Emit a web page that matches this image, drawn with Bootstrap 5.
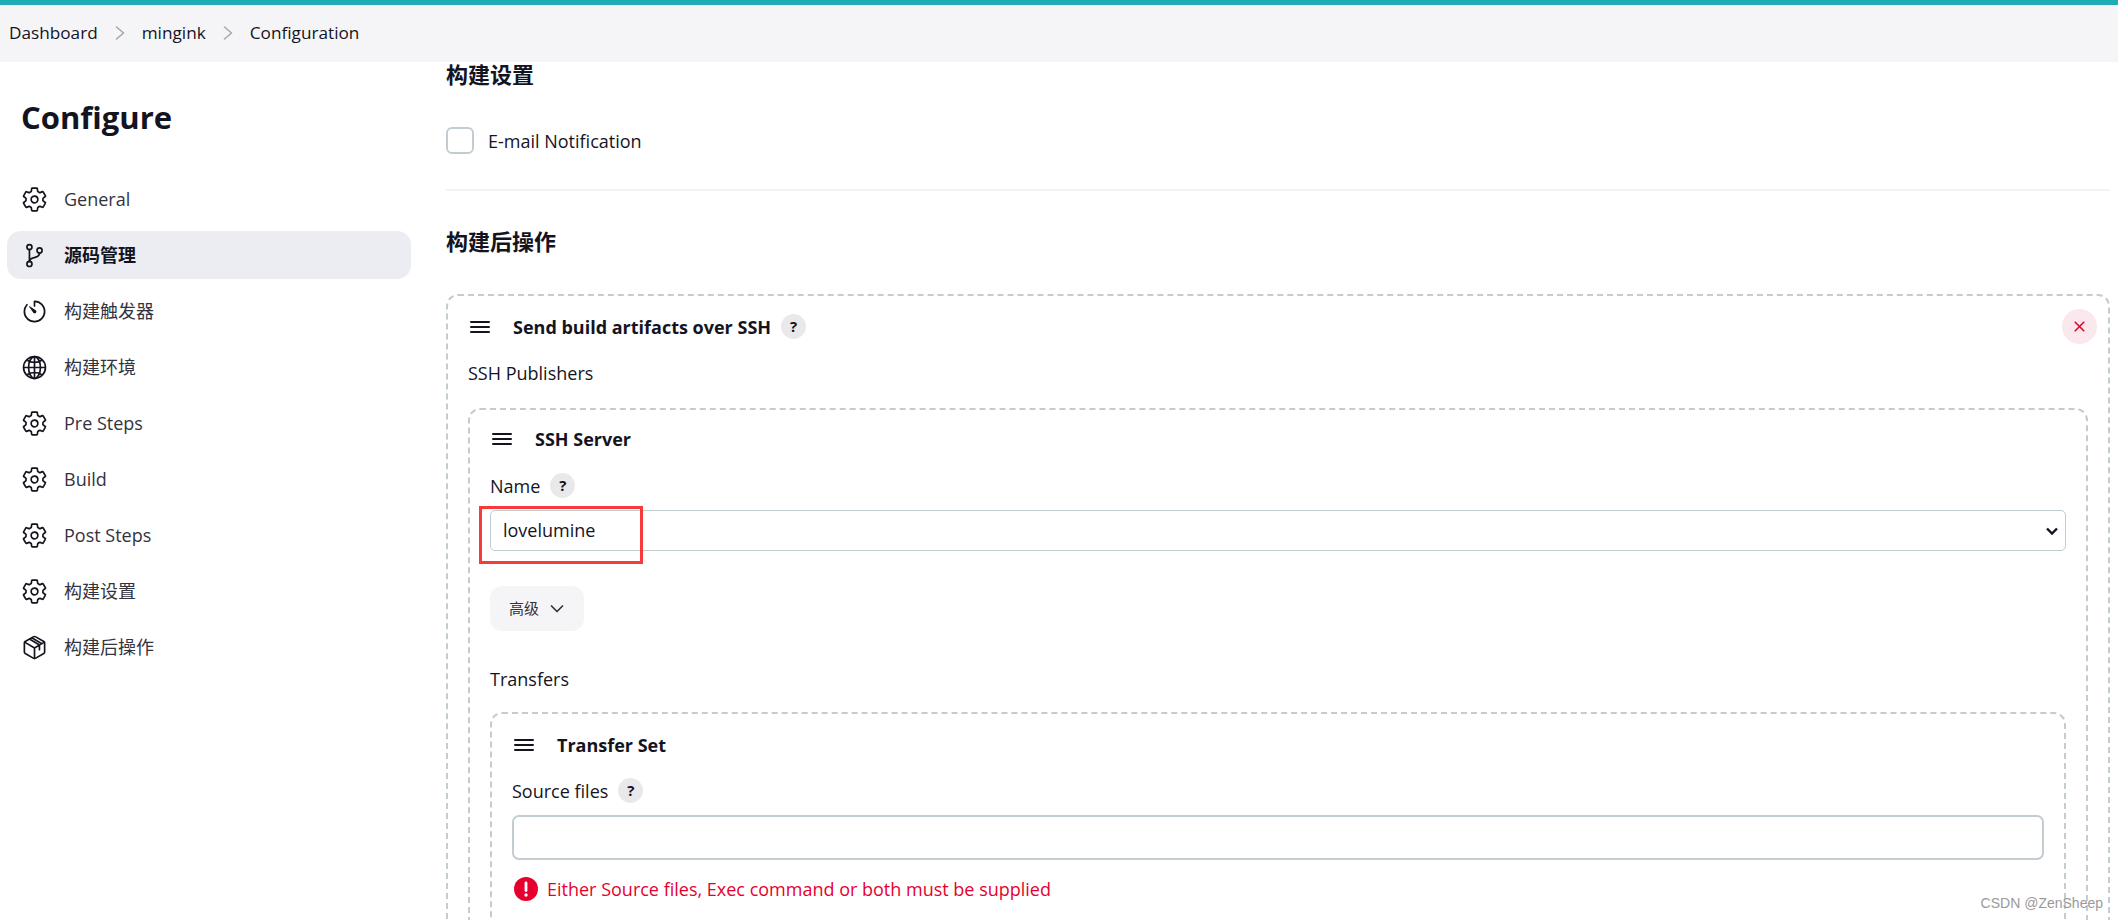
<!DOCTYPE html>
<html lang="zh"><head><meta charset="utf-8"><title>Configuration</title>
<link href="https://cdn.jsdelivr.net/npm/bootstrap@5.3.0/dist/css/bootstrap.min.css" rel="stylesheet">
<style>
html,body{height:920px;overflow:hidden}
body{font-family:"Open Sans","Noto Sans CJK SC",sans-serif;font-size:18px;color:#14141f;line-height:24px;background:#fff;position:relative}
.topline{height:5px;background:#1eadb3}
.crumbs{height:57px;background:#f5f5f7;padding-left:9px;padding-bottom:1px;font-size:17.2px}
.crumbs svg{width:16px;height:16px;margin:0 14px 0 14px;color:#a5a5b5}
.shell{align-items:flex-start}
.side{width:446px;flex:none;padding:0 35px 0 7px}
.side h1{font-size:31px;font-weight:700;line-height:40px;margin:35px 0 38px 14px;color:#14141f}
.sideitem{height:48px;margin-bottom:8px;border-radius:14px;padding-left:14px;gap:16px;color:#333340;text-decoration:none}
.sideitem svg{width:27px;height:27px;flex:none;color:#14141f}
.sideitem.on{background:#ecedf2;font-weight:700;color:#14141f}
.mainpane{flex:1;padding-right:8px;min-width:0}
.sect{font-size:22px;font-weight:700;line-height:28px;margin:0}
.tick{width:28px;height:27px;border:2.5px solid #c3ccd1;border-radius:6px;flex:none}
.rule{height:2px;background:#f3f3f5;margin:0}
.dash{border:2px dashed #c3ccd1;border-radius:12px;position:relative}
.bar3{width:20px;height:20px;flex:none}
.lbl{font-weight:700}
.qmark{width:25px;height:25px;border-radius:50%;background:#e9e9ec;font-size:15px;font-weight:700;line-height:25px;text-align:center;flex:none}
.killbtn{position:absolute;right:11px;top:13px;width:35px;height:35px;border-radius:50%;background:#fbe8ec;color:#e6002e;border:0;padding:0}
.killbtn svg{width:19px;height:19px}
.namesel.form-select{height:41px;border:1px solid #c3ccd1;border-radius:5px;font-size:18px;color:#14141f;padding:0 36px 0 12px;box-shadow:none;background-image:url("data:image/svg+xml,%3csvg xmlns='http://www.w3.org/2000/svg' viewBox='0 0 12 12'%3e%3cpath fill='none' stroke='%2314141f' stroke-width='2.4' d='M1 3.5l5 5 5-5'/%3e%3c/svg%3e");background-size:12px 12px;background-position:right 7px center}
.markbox{position:absolute;left:-11px;top:-4px;width:164px;height:58px;border:3px solid #f73a3a;pointer-events:none}
.advbtn.btn{background:#f5f5f7;border:0;border-radius:12px;width:94px;height:45px;font-size:15px;color:#333340;padding:0;gap:10px}
.srcinput.form-control{height:45px;border:2px solid #c3ccd1;border-radius:7px;box-shadow:none}
.errline{color:#e6002e;gap:9px;padding-left:2px}
.errline svg{width:24px;height:24px}
.stamp{position:absolute;right:15px;bottom:8px;font-family:"Liberation Sans",sans-serif;font-size:14px;line-height:18px;color:#9a9a9a}
</style></head>
<body>
<svg width="0" height="0" class="d-block position-absolute">
<symbol id="gear" viewBox="0 0 512 512"><path fill="none" stroke="currentColor" stroke-width="32" stroke-linecap="round" stroke-linejoin="round" d="M262.29 192.31a64 64 0 1057.4 57.4 64.13 64.13 0 00-57.4-57.4zM416.39 256a154.34 154.34 0 01-1.53 20.79l45.21 35.46a10.81 10.81 0 012.45 13.75l-42.77 74a10.81 10.81 0 01-13.14 4.59l-44.9-18.08a16.11 16.11 0 00-15.17 1.75A164.48 164.48 0 01325 400.8a15.94 15.94 0 00-8.82 12.14l-6.73 47.89a11.08 11.08 0 01-10.68 9.17h-85.54a11.11 11.11 0 01-10.69-8.87l-6.72-47.82a16.07 16.07 0 00-9-12.22 155.3 155.3 0 01-21.46-12.57 16 16 0 00-15.11-1.71l-44.89 18.07a10.81 10.81 0 01-13.14-4.58l-42.77-74a10.8 10.8 0 012.45-13.75l38.21-30a16.05 16.05 0 006-14.08c-.36-4.17-.58-8.33-.58-12.5s.21-8.27.58-12.35a16 16 0 00-6.07-13.94l-38.19-30A10.81 10.81 0 0149.48 186l42.77-74a10.81 10.81 0 0113.14-4.59l44.9 18.08a16.11 16.11 0 0015.17-1.75A164.48 164.48 0 01187 111.2a15.94 15.94 0 008.82-12.14l6.73-47.89A11.08 11.08 0 01213.23 42h85.54a11.11 11.11 0 0110.69 8.87l6.72 47.82a16.07 16.07 0 009 12.22 155.3 155.3 0 0121.46 12.57 16 16 0 0015.11 1.71l44.89-18.07a10.81 10.81 0 0113.14 4.58l42.77 74a10.8 10.8 0 01-2.45 13.75l-38.21 30a16.05 16.05 0 00-6.05 14.08c.33 4.14.55 8.3.55 12.47z"/></symbol>
<symbol id="branch" viewBox="0 0 512 512"><g fill="none" stroke="currentColor" stroke-width="32" stroke-linecap="round" stroke-linejoin="round"><circle cx="160" cy="96" r="48"/><circle cx="160" cy="416" r="48"/><path d="M160 368V144"/><circle cx="352" cy="160" r="48"/><path d="M352 208c0 128-192 48-192 160"/></g></symbol>
<symbol id="timer" viewBox="0 0 512 512"><g fill="none" stroke="currentColor" stroke-width="32" stroke-linecap="round" stroke-linejoin="round"><path d="M112.91 128A191.85 191.85 0 0064 254c-1.18 106.35 85.65 193.8 192 194 106.2.2 192-85.83 192-192 0-104.54-83.55-189.61-187.5-192a4.36 4.36 0 00-4.5 4.37V152"/></g><path fill="currentColor" d="M233.38 278.63l-79-113a8.13 8.13 0 0111.32-11.32l113 79a32.5 32.5 0 01-37 53.34 33.21 33.21 0 01-8.32-8.02z"/></symbol>
<symbol id="globe" viewBox="0 0 512 512"><g fill="none" stroke="currentColor" stroke-width="32" stroke-miterlimit="10"><path d="M256 48C141.13 48 48 141.13 48 256s93.13 208 208 208 208-93.13 208-208S370.87 48 256 48z"/><path d="M256 48c-58.07 0-112.67 93.31-112.67 208S197.93 464 256 464s112.67-93.31 112.67-208S314.07 48 256 48z"/><path d="M117.33 117.33c38.24 27.15 86.38 43.34 138.67 43.34s100.43-16.19 138.67-43.34M394.67 394.67c-38.24-27.15-86.38-43.34-138.67-43.34s-100.43 16.19-138.67 43.34M256 48v416M464 256H48"/></g></symbol>
<symbol id="box" viewBox="0 0 512 512"><g fill="none" stroke="currentColor" stroke-width="32" stroke-linecap="round" stroke-linejoin="round"><path d="M448 341.37V170.61A32 32 0 00432.11 143l-152-88.46a47.94 47.94 0 00-48.24 0L79.89 143A32 32 0 0064 170.61v170.76A32 32 0 0079.89 369l152 88.46a48 48 0 0048.24 0l152-88.46A32 32 0 00448 341.37z"/><path d="M69 154l187 110 187-110M256 464V264M160 96l190 112v90M205 72l190 112"/></g></symbol>
<symbol id="lines" viewBox="0 0 20 20"><path fill="none" stroke="currentColor" stroke-width="2" stroke-linecap="round" d="M1 5h18M1 10h18M1 15h18"/></symbol>
<symbol id="chev" viewBox="0 0 16 16"><path fill="none" stroke="currentColor" stroke-width="1.7" stroke-linecap="round" stroke-linejoin="round" d="M2.5 5l5.5 5.5L13.5 5"/></symbol>
</svg>
<div class="topline"></div>
<nav class="crumbs d-flex align-items-center"><span>Dashboard</span><svg viewBox="0 0 16 16"><path fill="none" stroke="currentColor" stroke-width="1.6" stroke-linecap="round" stroke-linejoin="round" d="M4.5 2l7 6-7 6"/></svg><span>mingink</span><svg viewBox="0 0 16 16"><path fill="none" stroke="currentColor" stroke-width="1.6" stroke-linecap="round" stroke-linejoin="round" d="M4.5 2l7 6-7 6"/></svg><span>Configuration</span></nav>
<div class="shell d-flex">
<aside class="side">
<h1>Configure</h1>
<a class="sideitem d-flex align-items-center"><svg><use href="#gear"/></svg>General</a>
<a class="sideitem on d-flex align-items-center"><svg><use href="#branch"/></svg>源码管理</a>
<a class="sideitem d-flex align-items-center"><svg><use href="#timer"/></svg>构建触发器</a>
<a class="sideitem d-flex align-items-center"><svg><use href="#globe"/></svg>构建环境</a>
<a class="sideitem d-flex align-items-center"><svg><use href="#gear"/></svg>Pre Steps</a>
<a class="sideitem d-flex align-items-center"><svg><use href="#gear"/></svg>Build</a>
<a class="sideitem d-flex align-items-center"><svg><use href="#gear"/></svg>Post Steps</a>
<a class="sideitem d-flex align-items-center"><svg><use href="#gear"/></svg>构建设置</a>
<a class="sideitem d-flex align-items-center"><svg><use href="#box"/></svg>构建后操作</a>
</aside>
<main class="mainpane">
<h2 class="sect" style="margin-top:-2px">构建设置</h2>
<div class="d-flex align-items-center" style="gap:14px;margin-top:39px"><span class="tick"></span><span>E-mail Notification</span></div>
<div class="rule" style="margin-top:35px"></div>
<h2 class="sect" style="margin-top:36px">构建后操作</h2>
<section class="dash" style="margin-top:39px;padding:18px 20px 40px 20px">
<button class="killbtn d-flex align-items-center justify-content-center" type="button" aria-label="Remove"><svg viewBox="0 0 20 20"><path fill="none" stroke="currentColor" stroke-width="1.6" d="M5 5l10 10M15 5L5 15"/></svg></button>
<div class="d-flex align-items-center" style="height:25px;padding-left:2px"><svg class="bar3"><use href="#lines"/></svg><span class="lbl" style="margin-left:23px">Send build artifacts over SSH</span><span class="qmark" style="margin-left:10px">?</span></div>
<div style="margin-top:22px">SSH Publishers</div>
<div class="dash" style="margin-top:23px;padding:16px 20px 40px 20px">
<div class="d-flex align-items-center" style="height:25px;padding-left:2px"><svg class="bar3"><use href="#lines"/></svg><span class="lbl" style="margin-left:23px">SSH Server</span></div>
<div class="d-flex align-items-center" style="margin-top:22px;gap:10px"><span>Name</span><span class="qmark">?</span></div>
<div class="position-relative" style="margin-top:12px"><select class="form-select namesel"><option>lovelumine</option></select><div class="markbox"></div></div>
<button class="advbtn btn d-flex align-items-center justify-content-center" type="button" style="margin-top:35px">高级<svg width="16" height="16"><use href="#chev"/></svg></button>
<div style="margin-top:36px">Transfers</div>
<div class="dash" style="margin-top:21px;padding:18px 20px 60px 20px">
<div class="d-flex align-items-center" style="height:25px;padding-left:2px"><svg class="bar3"><use href="#lines"/></svg><span class="lbl" style="margin-left:23px">Transfer Set</span></div>
<div class="d-flex align-items-center" style="margin-top:21px;gap:10px"><span>Source files</span><span class="qmark">?</span></div>
<input class="form-control srcinput" type="text" style="margin-top:12px">
<div class="errline d-flex align-items-center" style="margin-top:17px"><svg viewBox="0 0 24 24"><circle cx="12" cy="12" r="12" fill="#e6002e"/><path fill="none" stroke="#fff" stroke-width="2.8" stroke-linecap="round" d="M12 6v7.5"/><circle cx="12" cy="18" r="1.7" fill="#fff"/></svg><span>Either Source files, Exec command or both must be supplied</span></div>
</div>
</div>
</section>
</main>
</div>
<div class="stamp">CSDN @ZenSheep</div>
</body></html>
